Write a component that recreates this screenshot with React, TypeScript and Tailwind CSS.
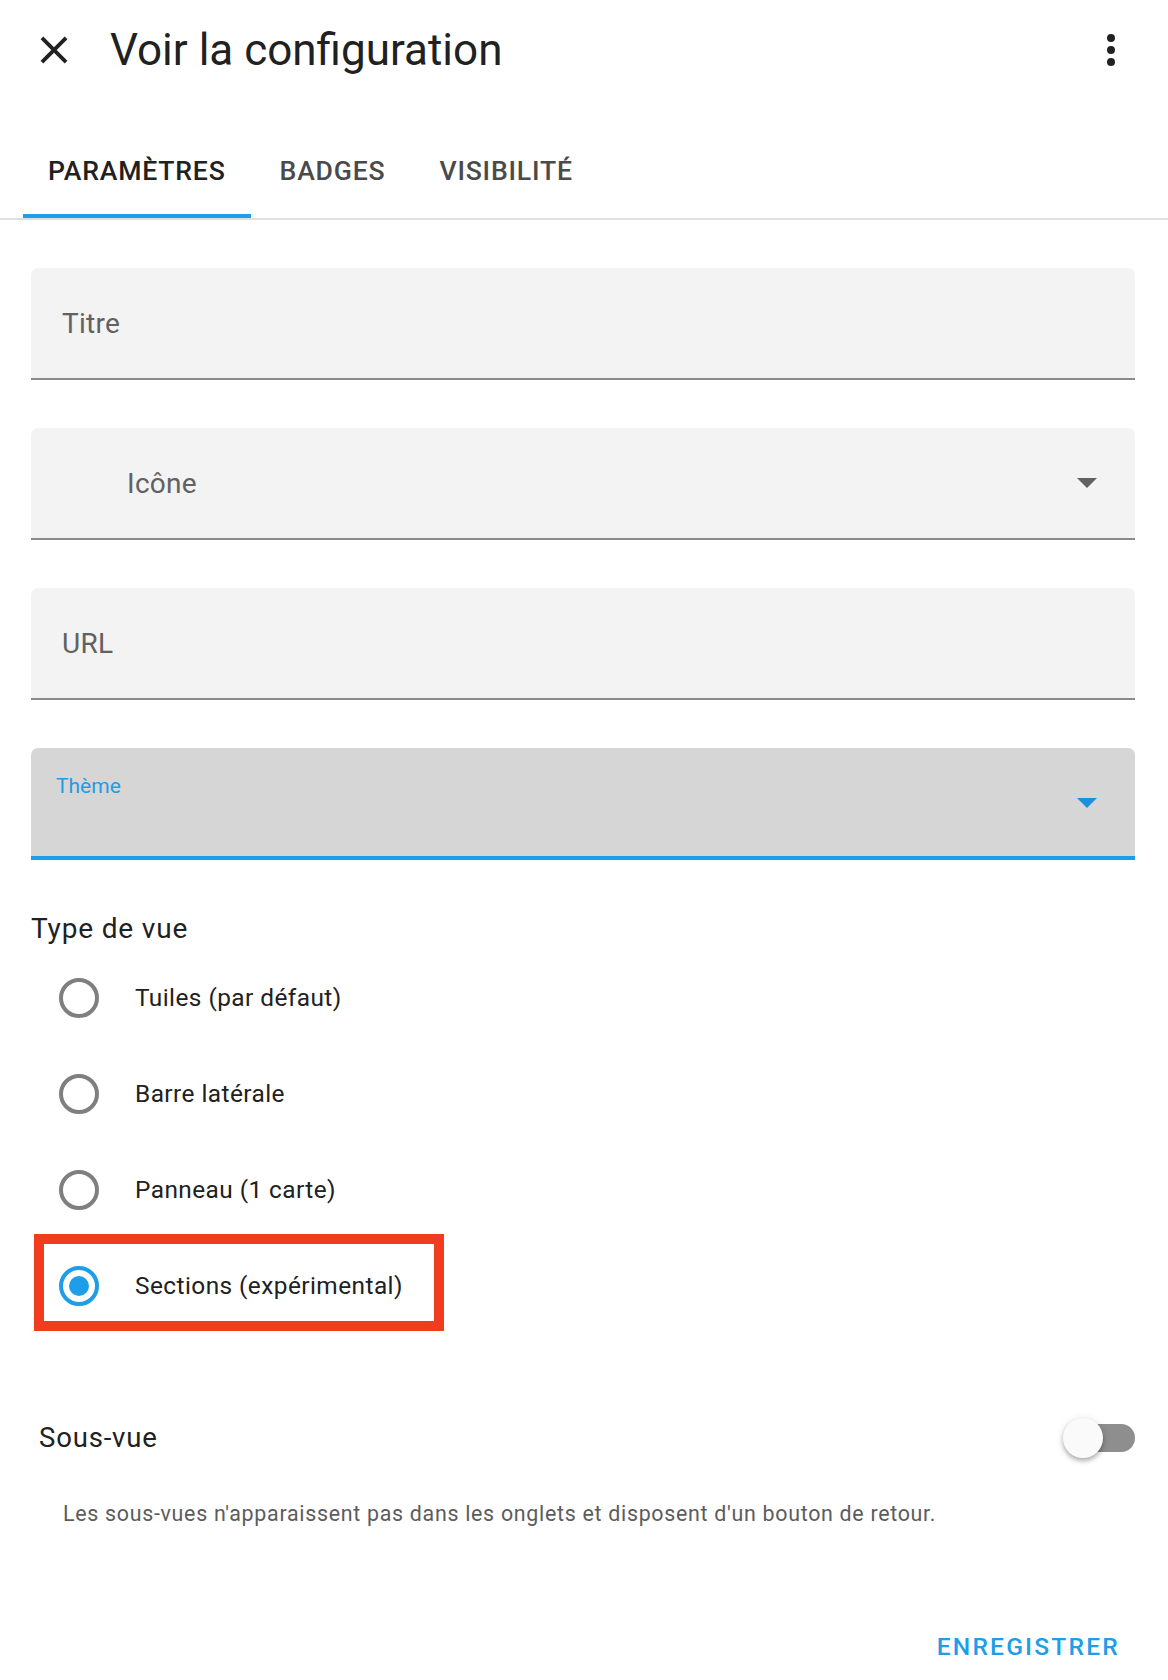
import { useState } from 'react'

const tabs = ['Paramètres', 'Badges', 'Visibilité']

const viewTypes = [
  { id: 'masonry', label: 'Tuiles (par défaut)' },
  { id: 'sidebar', label: 'Barre latérale' },
  { id: 'panel', label: 'Panneau (1 carte)' },
  { id: 'sections', label: 'Sections (expérimental)' },
]

function Arrow({ color }: { color: string }) {
  return (
    <svg width="20" height="10" viewBox="0 0 20 10" className="shrink-0">
      <path d="M0 0 L20 0 L10 10 Z" fill={color} />
    </svg>
  )
}

function Field({ label, indent = false, select = false }: { label: string; indent?: boolean; select?: boolean }) {
  return (
    <div className="h-[112px] rounded-t-[7px] bg-[#f3f3f3] border-b-2 border-[#8a8a8a] flex items-center pr-[38px]">
      <span className={`flex-1 pt-[2px] text-[28px] tracking-[0.01em] text-[#616161] ${indent ? 'pl-[96px]' : 'pl-[31px]'}`}>{label}</span>
      {select && <Arrow color="#616161" />}
    </div>
  )
}

function Radio({ checked }: { checked: boolean }) {
  if (checked) {
    return (
      <div className="w-[40px] h-[40px] rounded-full border-4 border-[#1e9de8] flex items-center justify-center shrink-0">
        <div className="w-[20px] h-[20px] rounded-full bg-[#1e9de8]" />
      </div>
    )
  }
  return <div className="w-[40px] h-[40px] rounded-full border-4 border-[#7f7f7f] shrink-0" />
}

export default function App() {
  const [tab] = useState(0)
  const [view] = useState('sections')

  return (
    <div className="min-h-[1680px] bg-white font-['Roboto',sans-serif] text-[#212121]">
      {/* header */}
      <div className="h-[100px] flex items-center pl-[31px] pr-[33px]">
        <svg width="46" height="46" viewBox="0 0 24 24" className="shrink-0">
          <path fill="#212121" d="M19,6.41L17.59,5L12,10.59L6.41,5L5,6.41L10.59,12L5,17.59L6.41,19L12,13.41L17.59,19L19,17.59L13.41,12L19,6.41Z" />
        </svg>
        <h1 className="ml-[33px] flex-1 text-[44px] leading-none font-normal text-[#212121]">Voir la configuration</h1>
        <svg width="48" height="48" viewBox="0 0 24 24" className="shrink-0">
          <path fill="#212121" d="M12,16A2,2 0 0,1 14,18A2,2 0 0,1 12,20A2,2 0 0,1 10,18A2,2 0 0,1 12,16M12,10A2,2 0 0,1 14,12A2,2 0 0,1 12,14A2,2 0 0,1 10,12A2,2 0 0,1 12,10M12,4A2,2 0 0,1 14,6A2,2 0 0,1 12,8A2,2 0 0,1 10,6A2,2 0 0,1 12,4Z" />
        </svg>
      </div>

      {/* tabs */}
      <div className="mt-[21px] h-[99px] flex pl-[21px] border-b-2 border-[#e0e0e0]">
        {tabs.map((t, i) => (
          <div key={t} className="flex flex-col h-full px-[27px]">
            <div className={`flex-1 flex items-center pt-[6px] text-[26.6px] font-medium uppercase tracking-[0.03em] ${i === tab ? 'text-[#212121]' : 'text-[#4a4a4a]'}`}>
              {t}
            </div>
            <div className={`h-[4px] mx-[-25px] ${i === tab ? 'bg-[#1e9de8]' : 'bg-transparent'}`} />
          </div>
        ))}
      </div>

      {/* body */}
      <div className="pl-[31px] pr-[33px] pt-[48px]">
        <div className="flex flex-col gap-[48px]">
          <Field label="Titre" />
          <Field label="Icône" indent select />
          <Field label="URL" />
          <div className="h-[112px] rounded-t-[7px] bg-[#d6d6d6] border-b-4 border-[#1e9de8] flex pr-[38px]">
            <div className="flex-1 pl-[25px] pt-[24px] text-[21px] leading-[28px] text-[#1e9de8]">Thème</div>
            <div className="flex items-center pt-[2px]">
              <Arrow color="#1e8fdc" />
            </div>
          </div>
        </div>

        <div className="mt-[51px] h-[36px] leading-[36px] text-[28px] tracking-[0.03em] text-[#212121]">Type de vue</div>

        <div className="mt-[3px] flex flex-col">
          {viewTypes.map((v) => (
            <div key={v.id} className="relative h-[96px] flex items-center pl-[28px]">
              <Radio checked={view === v.id} />
              <span className="ml-[36px] text-[24.4px] tracking-[0.018em] text-[#212121]">{v.label}</span>
              {v.id === 'sections' && (
                <div className="absolute left-[3px] top-[-4px] w-[410px] h-[97px] border-[10px] border-[#f23c1f] pointer-events-none" />
              )}
            </div>
          ))}
        </div>

        <div className="mt-[74px] h-[60px] flex items-center justify-between pl-[8px]">
          <span className="text-[27.5px] tracking-[0.03em] text-[#212121]">Sous-vue</span>
          <div className="relative w-[72px] h-[40px]">
            <div className="absolute right-0 top-[6px] w-[62px] h-[28px] rounded-full bg-[#8e8e8e]" />
            <div className="absolute left-0 top-0 w-[40px] h-[40px] rounded-full bg-[#fafafa] shadow-[0_3px_4px_rgba(0,0,0,0.25),0_1px_8px_rgba(0,0,0,0.12)]" />
          </div>
        </div>

        <p className="mt-[32px] pl-[32px] text-[21.4px] leading-[28px] tracking-[0.033em] text-[#5c5c5c]">
          Les sous-vues n'apparaissent pas dans les onglets et disposent d'un bouton de retour.
        </p>

        <div className="mt-[99px] flex justify-end pr-[15px]">
          <button className="h-[40px] text-[24.6px] font-medium uppercase tracking-[0.0893em] text-[#1e9de8]">Enregistrer</button>
        </div>
      </div>
    </div>
  )
}
